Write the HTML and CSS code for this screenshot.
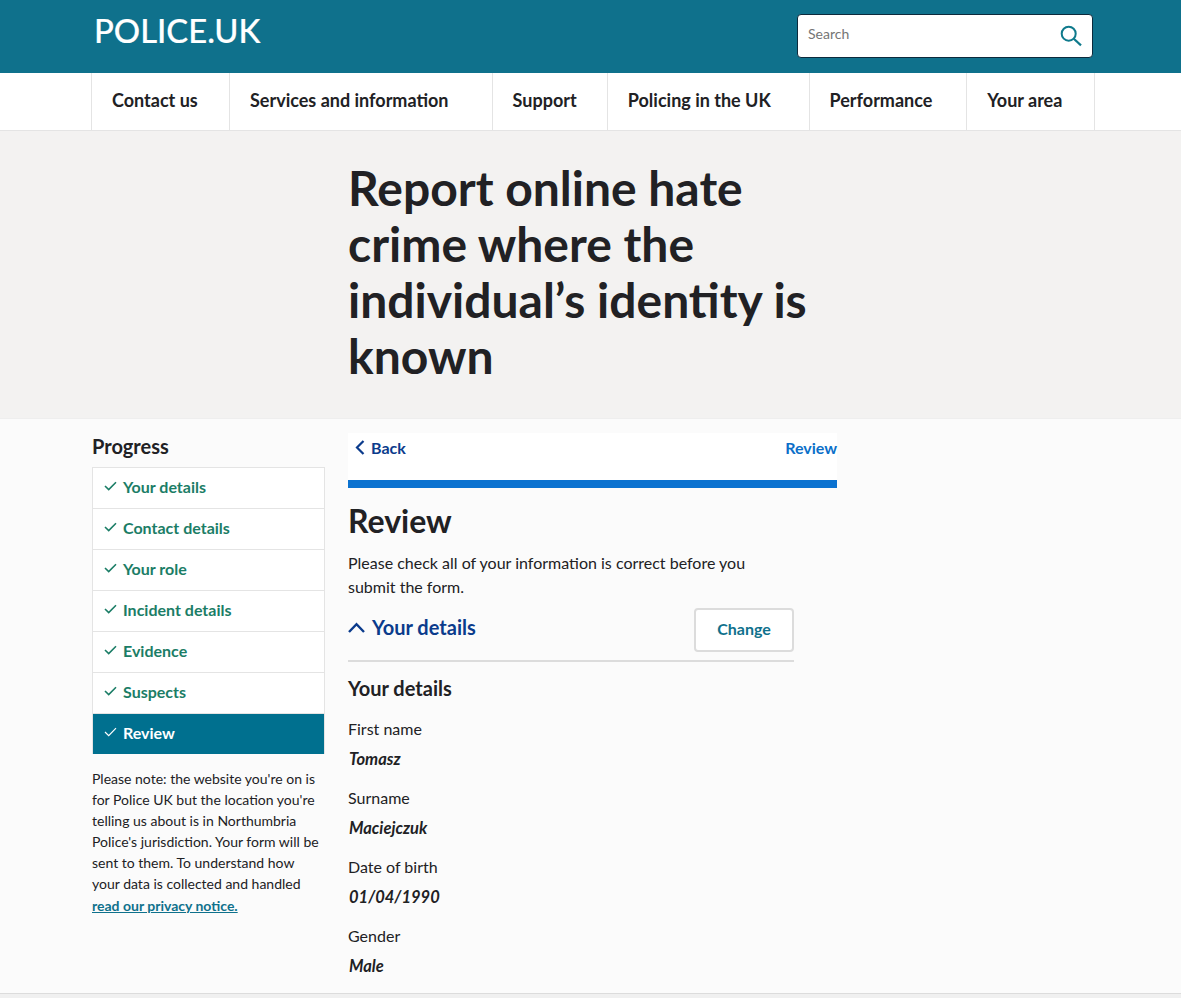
FILE: index.html
```html
<!DOCTYPE html>
<html lang="en">
<head>
<meta charset="utf-8">
<title>Report online hate crime</title>
<link rel="stylesheet" href="styles.css">
</head>
<body>
<header class="masthead">
  <div class="masthead-inner">
    <a class="logo" href="#">POLICE.UK</a>
    <div class="search">
      <span class="search-label">Search</span>
      <svg class="search-icon" width="22" height="22" viewBox="0 0 22 22" fill="none" stroke="#0f7a8c" stroke-width="2"><circle cx="8.7" cy="8.7" r="7"/><path d="M13.8 13.8 L21 20.4" stroke-width="2.2"/></svg>
    </div>
  </div>
</header>
<nav class="nav">
  <ul class="nav-list">
    <li class="nav-item">Contact us</li>
    <li class="nav-item">Services and information</li>
    <li class="nav-item">Support</li>
    <li class="nav-item">Policing in the UK</li>
    <li class="nav-item">Performance</li>
    <li class="nav-item">Your area</li>
  </ul>
</nav>
<section class="hero">
  <h1 class="hero-title">Report online hate crime where the individual’s identity is known</h1>
</section>
<main class="content">
  <aside class="side">
    <h2 class="side-title">Progress</h2>
    <ul class="steps">
      <li class="step"><svg class="tick" width="13" height="10" viewBox="0 0 13 10" fill="none" stroke="currentColor" stroke-width="1.6"><path d="M1 5 L4.7 8.6 L12 1.2"/></svg>Your details</li>
      <li class="step"><svg class="tick" width="13" height="10" viewBox="0 0 13 10" fill="none" stroke="currentColor" stroke-width="1.6"><path d="M1 5 L4.7 8.6 L12 1.2"/></svg>Contact details</li>
      <li class="step"><svg class="tick" width="13" height="10" viewBox="0 0 13 10" fill="none" stroke="currentColor" stroke-width="1.6"><path d="M1 5 L4.7 8.6 L12 1.2"/></svg>Your role</li>
      <li class="step"><svg class="tick" width="13" height="10" viewBox="0 0 13 10" fill="none" stroke="currentColor" stroke-width="1.6"><path d="M1 5 L4.7 8.6 L12 1.2"/></svg>Incident details</li>
      <li class="step"><svg class="tick" width="13" height="10" viewBox="0 0 13 10" fill="none" stroke="currentColor" stroke-width="1.6"><path d="M1 5 L4.7 8.6 L12 1.2"/></svg>Evidence</li>
      <li class="step"><svg class="tick" width="13" height="10" viewBox="0 0 13 10" fill="none" stroke="currentColor" stroke-width="1.6"><path d="M1 5 L4.7 8.6 L12 1.2"/></svg>Suspects</li>
      <li class="step step-current"><svg class="tick" width="13" height="10" viewBox="0 0 13 10" fill="none" stroke="currentColor" stroke-width="1.2"><path d="M1 5 L4.7 8.6 L12 1.2"/></svg>Review</li>
    </ul>
    <p class="note">Please note: the website you're on is for Police UK but the location you're telling us about is in Northumbria Police's jurisdiction. Your form will be sent to them. To understand how your data is collected and handled <a class="note-link" href="#">read our privacy notice.</a></p>
  </aside>
  <div class="form">
    <div class="form-bar">
      <a class="back" href="#"><svg class="back-icon" width="10" height="15" viewBox="0 0 10 15" fill="none" stroke="#0b3b8c" stroke-width="2.2"><path d="M8.5 1 L2 7.5 L8.5 14"/></svg>Back</a>
      <span class="form-step">Review</span>
    </div>
    <div class="form-progress"></div>
    <h2 class="form-title">Review</h2>
    <div class="form-body">
      <p class="intro">Please check all of your information is correct before you submit the form.</p>
      <div class="acc-head">
        <a class="acc-toggle" href="#"><svg class="acc-icon" width="17" height="11" viewBox="0 0 17 11" fill="none" stroke="#0b3b8c" stroke-width="2.4"><path d="M1 10 L8.5 2.2 L16 10"/></svg>Your details</a>
        <button class="change"><span class="change-text">Change</span></button>
      </div>
      <h3 class="sub">Your details</h3>
      <dl class="fields">
        <dt class="label">First name</dt><dd class="value">Tomasz</dd>
        <dt class="label">Surname</dt><dd class="value">Maciejczuk</dd>
        <dt class="label">Date of birth</dt><dd class="value">01/04/1990</dd>
        <dt class="label">Gender</dt><dd class="value">Male</dd>
      </dl>
    </div>
  </div>
</main>
<div class="foot-line"></div>
</body>
</html>
```
FILE: styles.css
```css
* { box-sizing: border-box; }
html, body { margin: 0; padding: 0; }
body {
  background: #fbfbfb;
  color: #212124;
  font-family: Lato, "Liberation Sans", sans-serif;
  height: 998px;
  overflow: hidden;
  text-rendering: optimizeLegibility;
}
a { text-decoration: none; }
ul { list-style: none; margin: 0; padding: 0; }

.masthead { background: #0f718c; height: 73px; }
.masthead-inner {
  display: flex;
  justify-content: space-between;
  align-items: flex-start;
  padding: 14px 88px 0 94px;
}
.logo {
  color: #fff;
  font-size: 32.8px;
  font-weight: 500;
  line-height: 34px;
  -webkit-text-stroke: 0.2px #fff;
}
.search {
  width: 296px;
  height: 44px;
  background: #fff;
  border: 1px solid #0d2a3c;
  border-radius: 4px;
  display: flex;
  align-items: center;
  justify-content: space-between;
  padding: 0 10px;
}
.search-label { color: #757575; font-size: 14px; padding-bottom: 6px; }

.nav { background: #fff; height: 58px; border-bottom: 1px solid #e4e4e4; padding-left: 91px; }
.nav-list { display: table; width: 1003.6px; height: 57px; border-left: 1px solid #e4e4e4; }
.nav-item {
  display: table-cell;
  padding: 0 20px;
  font-size: 18px;
  font-weight: 700;
  line-height: 55px;
  border-right: 1px solid #e4e4e4;
  white-space: nowrap;
}
.nav-item:first-child { width: 138px; }

.hero { background: #f3f2f1; height: 288px; padding: 29px 0 0 348px; border-bottom: 1px solid #eee; }
.hero-title {
  margin: 0;
  width: 480px;
  font-size: 48px;
  line-height: 56px;
  font-weight: 700;
}

.content { display: flex; padding: 14px 0 0 92px; gap: 23px; }
.side { width: 233px; flex: none; }
.side-title { margin: 0 0 8px; font-size: 20px; line-height: 26px; font-weight: 700; }
.steps { border: 1px solid #e4e4e4; border-bottom: 0; }
.step {
  display: flex;
  align-items: center;
  height: 41px;
  padding: 0 0 4px 11px;
  background: #fff;
  border-bottom: 1px solid #e4e4e4;
  color: #1b7d66;
  font-size: 16px;
  font-weight: 700;
}
.tick { margin-right: 6px; flex: none; }
.step-current { background: #00708f; color: #fff; border-bottom: 0; height: 40px; }
.note { margin: 14px 0 0; padding-right: 3px; font-size: 14px; line-height: 21.1px; }
.note-link { color: #0f718c; font-weight: 700; text-decoration: underline; }

.form { width: 489px; flex: none; }
.form-bar {
  display: flex;
  justify-content: space-between;
  align-items: center;
  height: 47px;
  background: #fff;
  padding: 0 0 19px 7px;
  font-size: 16px;
  font-weight: 700;
}
.back { color: #0b3b8c; display: flex; align-items: center; }
.back-icon { margin-right: 6px; }
.form-step { color: #0b6fc9; }
.form-progress { height: 8px; background: #0b72d0; }
.form-title { margin: 14px 0 0; font-size: 32px; line-height: 38px; font-weight: 700; }
.form-body { width: 446px; }
.intro { margin: 11px 0 0; font-size: 16px; line-height: 24px; }
.acc-head {
  display: flex;
  justify-content: space-between;
  align-items: flex-start;
  margin-top: 9px;
  height: 54px;
  border-bottom: 2px solid #dcdcdc;
}
.acc-toggle {
  color: #0b3b8c;
  font-size: 20px;
  font-weight: 700;
  line-height: 38px;
  display: flex;
  align-items: center;
}
.acc-icon { margin-right: 7px; }
.change {
  width: 100px;
  height: 44px;
  padding: 0 0 4px;
  background: #fff;
  border: 2px solid #dcdcdc;
  border-radius: 4px;
  color: #0f718c;
  font: 700 16px Lato, "Liberation Sans", sans-serif;
}
.sub { margin: 12px 0 0; font-size: 20px; line-height: 28px; font-weight: 700; }
.fields { margin: 15px 0 0; }
.label { font-size: 16px; line-height: 24px; }
.value { margin: 6px 0 15px; padding-left: 1px; font-size: 16.5px; line-height: 24px; font-weight: 700; font-style: italic; }
.foot-line { position: absolute; left: 0; right: 0; top: 993px; height: 5px; background: #f0f0f0; border-top: 1px solid #dcdcdc; }
```
